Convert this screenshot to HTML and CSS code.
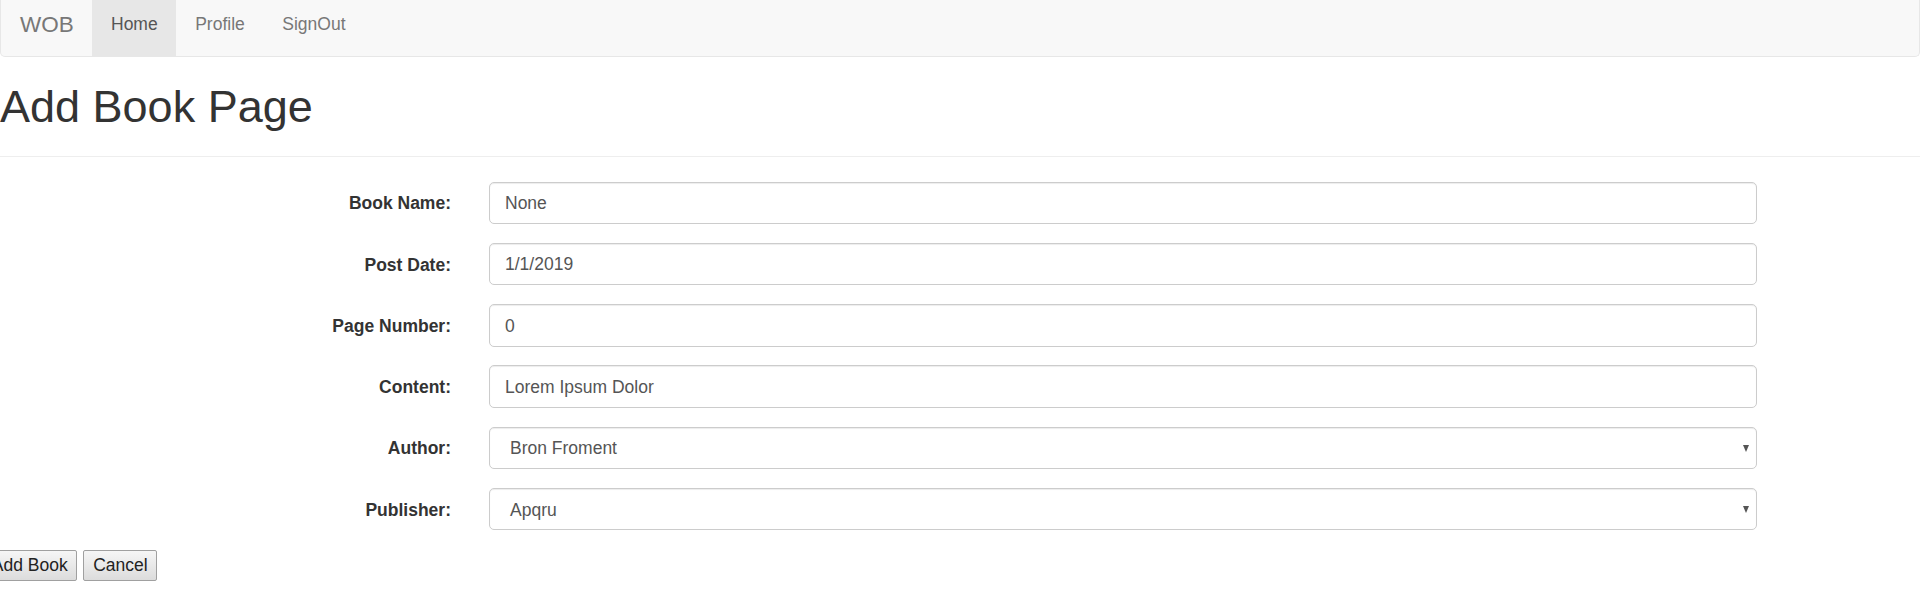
FILE: index.html
```html
<!DOCTYPE html>
<html>
<head>
<meta charset="utf-8">
<title>Add Book Page</title>
<link rel="stylesheet" href="styles.css">
</head>
<body>
<nav class="navbar">
  <a class="brand">WOB</a>
  <a class="nav-link active">Home</a>
  <a class="nav-link">Profile</a>
  <a class="nav-link">SignOut</a>
</nav>
<div class="page-header">
  <h1>Add Book Page</h1>
</div>
<form class="form">
  <div class="row">
    <label class="label">Book Name:</label>
    <div class="control">None</div>
  </div>
  <div class="row">
    <label class="label">Post Date:</label>
    <div class="control">1/1/2019</div>
  </div>
  <div class="row">
    <label class="label">Page Number:</label>
    <div class="control">0</div>
  </div>
  <div class="row">
    <label class="label">Content:</label>
    <div class="control">Lorem Ipsum Dolor</div>
  </div>
  <div class="row">
    <label class="label">Author:</label>
    <div class="control select"><span>Bron Froment</span><span class="arrow"></span></div>
  </div>
  <div class="row">
    <label class="label">Publisher:</label>
    <div class="control select"><span>Apqru</span><span class="arrow"></span></div>
  </div>
  <div class="actions">
    <button type="button" class="btn">Add Book</button>
    <button type="button" class="btn">Cancel</button>
  </div>
</form>
</body>
</html>
```
FILE: styles.css
```css
html, body {
  margin: 0;
  padding: 0;
  background: #fff;
}
body {
  font-family: "Liberation Sans", Arial, sans-serif;
  font-size: 17.5px;
  line-height: 25px;
  color: #333;
  overflow: hidden;
}
.navbar {
  display: flex;
  height: 55.5px;
  background: #f8f8f8;
  border: 1px solid #e7e7e7;
  border-top: none;
  border-radius: 0 0 5px 5px;
}
.brand {
  font-size: 22.5px;
  line-height: 25px;
  color: #777;
  padding: 12px 18.5px 0 19px;
}
.nav-link {
  color: #777;
  padding: 12px 18.75px 0;
  line-height: 25px;
}
.nav-link.active {
  background: #e7e7e7;
  color: #555;
}
.page-header {
  margin-top: 25px;
  padding-bottom: 24.5px;
  border-bottom: 1.5px solid #eee;
}
h1 {
  margin: 0;
  font-size: 45px;
  font-weight: 400;
  line-height: 49.5px;
  color: #333;
}
.form {
  margin-top: 25px;
}
.row {
  display: grid;
  grid-template-columns: 451px 1267.5px;
  column-gap: 38px;
  margin-bottom: 18.75px;
}
.label {
  text-align: right;
  font-weight: 700;
  padding-top: 9.75px;
  line-height: 25px;
}
.control {
  box-sizing: border-box;
  height: 42.5px;
  padding: 8.5px 15px 6.5px;
  border: 1.25px solid #ccc;
  border-radius: 5px;
  box-shadow: inset 0 1px 1px rgba(0,0,0,.075);
  color: #555;
  line-height: 25px;
  background: #fff;
}
.select {
  display: flex;
  justify-content: space-between;
  align-items: center;
  padding-left: 20px;
  padding-right: 7px;
}
.arrow {
  width: 0;
  height: 0;
  border-left: 3.5px solid transparent;
  border-right: 3.5px solid transparent;
  border-top: 7px solid #555;
  margin-top: -1px;
}
.actions {
  display: flex;
  gap: 6px;
  margin-left: -18px;
  margin-top: 20px;
}
.btn {
  box-sizing: border-box;
  height: 30.5px;
  padding: 0 8.75px;
  font-family: "Liberation Sans", Arial, sans-serif;
  font-size: 17.5px;
  color: #222;
  background: linear-gradient(#f6f6f6, #dcdcdc);
  border: 1.5px solid #a0a0a0;
  border-radius: 2px;
}
```
